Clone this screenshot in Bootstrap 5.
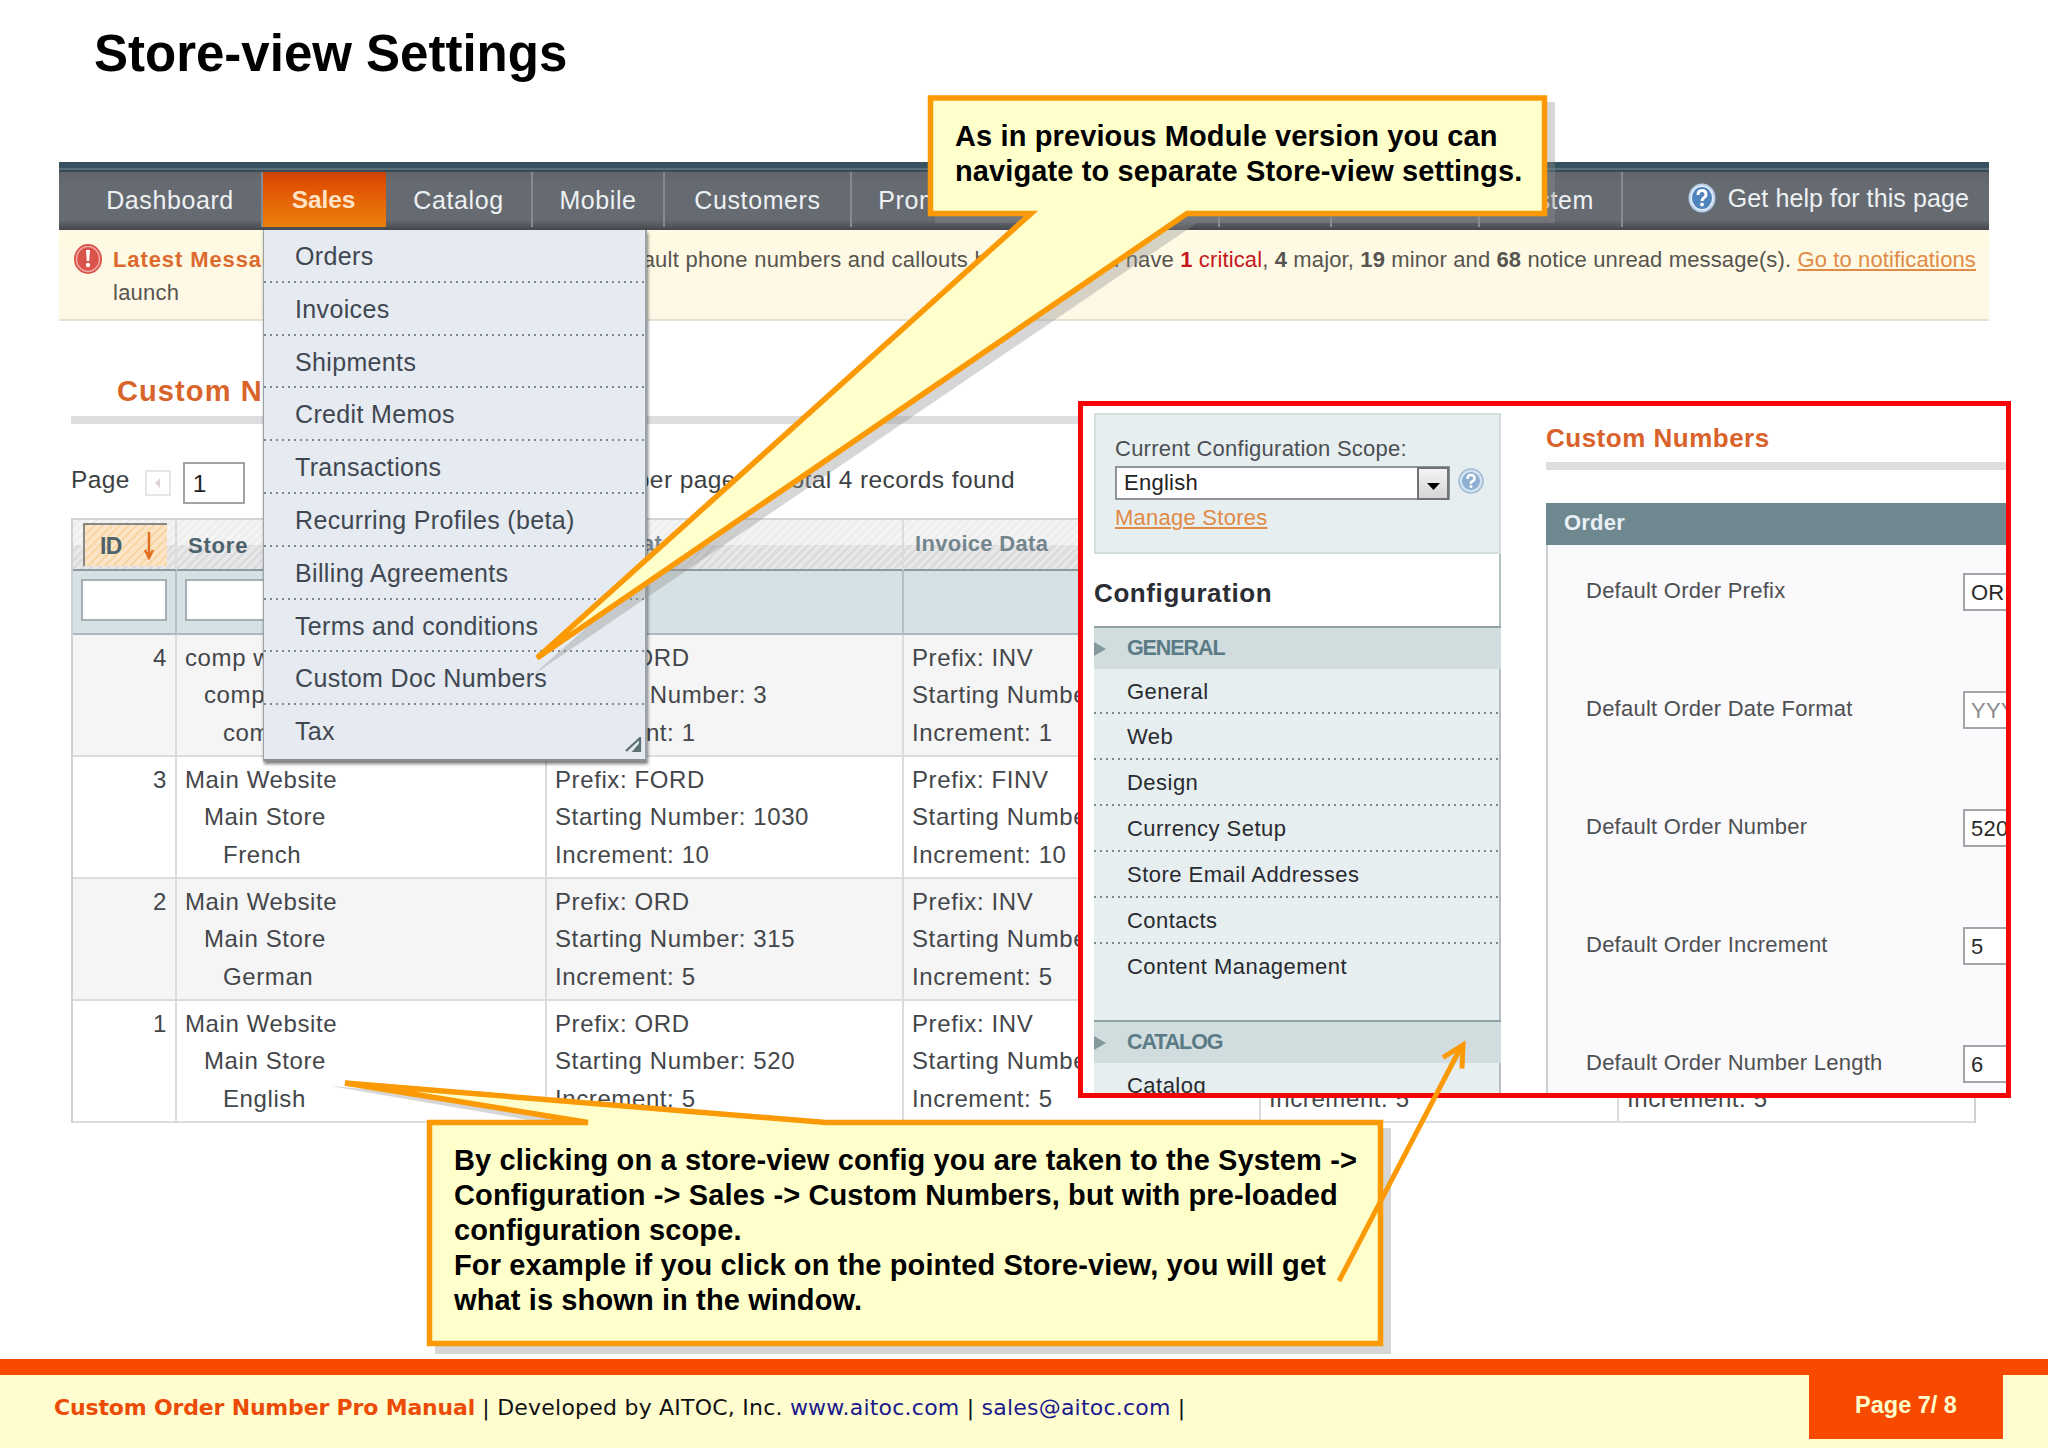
<!DOCTYPE html>
<html lang="en">
<head>
<meta charset="utf-8">
<meta name="viewport" content="width=device-width, initial-scale=1">
<title>Store-view Settings</title>
<link href="https://cdn.jsdelivr.net/npm/bootstrap@5.3.0/dist/css/bootstrap.min.css" rel="stylesheet">
<style>
body{font-family:"Liberation Sans",Arial,sans-serif;background:#fff;color:#3c3f42}
.slide{width:2048px;height:1448px}
.slide-title{font-size:51px;line-height:107px;height:162px;padding-left:94px;color:#000}
.shot{margin-left:59px;width:1930px;height:1197px}
/* admin menu bar */
.strip{height:10px;background:linear-gradient(#37525f 0 6px,#56707a 6px 8px,#3b4c56 8px)}
.admin-nav{height:58px;background:linear-gradient(#60656b 0,#666b72 12px,#666b72 48px,#43464a 58px);font-size:25px;letter-spacing:.6px;color:#eef1f3}
.admin-nav .nav-item{height:55px;line-height:56px;text-align:center;border-right:2px solid #858a90}
.admin-nav .nav-item.on{background:linear-gradient(#c94300,#e25304 25%,#ec820d);color:#ffe3c6;border-color:transparent;background-clip:border-box;letter-spacing:-.1px;font-size:24.5px}
.help-link{font-size:25px;letter-spacing:.1px;line-height:53px}
.help-icon{margin:11px 12px 0 0}
/* message strip */
.notice{height:91px;background:linear-gradient(#fefae3,#fef7e6);border-bottom:2px solid #e4e2d2;padding:13px 13px 0 15px;font-size:22px;line-height:33px;letter-spacing:.24px;color:#57544f}
.notice-icon{margin:1px 11px 0 0}
.notice-left{width:860px}
.notice-right{letter-spacing:.13px}
.critical{color:#c5161d}
.orange{color:#dc6a2c;letter-spacing:.9px}
.notice a,.scope a{color:#e08a45}
.grid-title{font-size:29px;letter-spacing:1.1px;line-height:36px;height:95px;padding:52px 0 0 58px;color:#d9642a}
.rule{height:8px;background:#dedee0}
.shot>.rule{margin-left:12px}
/* pager */
.pager{height:94px;padding:38px 0 0 12px;font-size:24.5px;letter-spacing:.4px;line-height:42px}
.pager .pg-word{line-height:35px}
.pager .pg-size{margin-left:391px;width:142px}
.pager .pg-prev{width:26px;height:26px;border:2px solid #e9e4e6;margin-left:15px}
.pager .pg-input{width:62px;height:42px;border:2px solid #a0a3a6;background:#fff;padding-left:8px;margin-left:12px;line-height:39px;color:#222}
/* grid */
.doc-grid{margin-left:12px;width:1905px;table-layout:fixed;border-collapse:separate;border-spacing:0;border-left:2px solid #cfd1d4;border-right:2px solid #cfd1d4;font-size:24px;line-height:37.3px;letter-spacing:.6px;color:#44464a}
.doc-grid th,.doc-grid td{border-right:2px solid #dbdcde;border-bottom:2px solid #dbdcde;padding:4px 8px 0 8px;vertical-align:top;font-weight:400}
.doc-grid tr>:last-child{border-right:0}
.doc-grid tbody tr{height:122px}
.doc-grid tbody tr:nth-child(odd){background:#f5f5f6}
.doc-grid tbody tr:nth-child(even){background:#fff}
.doc-grid .lbl th{height:53px;padding:7px 0 0 11px;border-top:2px solid #d2d4d6;border-bottom:2px solid #8b9a9c;background:repeating-linear-gradient(135deg,rgba(255,255,255,.35) 0 3px,transparent 3px 6px),linear-gradient(#eeeeef 50%,#dcdcde 50%);font-size:22px;font-weight:700;line-height:34px;letter-spacing:.3px;color:#74868d}
.doc-grid .lbl th:nth-child(-n+2){color:#4d626b}
.doc-grid .lbl .store-h{letter-spacing:.8px;line-height:37px}
.doc-grid .lbl th:first-child{padding:3px 8px 0 10px}
.id-box{height:43px;border:2px solid #8a8782;border-right:0;border-bottom:0;background:repeating-linear-gradient(135deg,#f8d5a4 0 2px,#fce5c6 2px 6px);padding:0 12px 0 15px;font-size:23px;letter-spacing:-.6px}
.doc-grid .flt th{height:64px;background:#d5e1e5;border-bottom:2px solid #acb9bd;border-right-color:#b3bfc3;padding:8px 8px 0 8px}
.flt-in{height:42px;border:2px solid #a5b0b4;background:#fff}
.lv2{padding-left:19px}.lv3{padding-left:38px}
.last-line{padding-top:74.6px}
.c-id{width:104px}.c-store{width:370px}.c-data{width:357px}.c-wide{width:358px}
/* open menu */
.sales-menu{left:263px;top:230px;width:384px;height:531px;background:#e5ebf0;border-left:1px solid #9aa3a8;border-right:2px solid #9aa3a8;border-bottom:2px solid #8a9195;box-shadow:1px 3px 3px rgba(0,0,0,.5);font-size:25px;letter-spacing:.35px;color:#414750}
.sales-menu div{height:52.8px;line-height:53px;padding-left:31px}
.sales-menu div:not(:last-of-type),.cfg-item{background-image:repeating-linear-gradient(90deg,#7f8889 0 2px,transparent 2px 6px);background-size:100% 2px;background-position:left bottom;background-repeat:no-repeat}
.resize{right:3px;bottom:7px}
/* framed window */
.win{left:1078px;top:401px;width:933px;height:697px;border:5px solid #f80303;background:#fff;overflow:hidden;font-size:22px;letter-spacing:.25px}
.win-side{width:407px;margin:7px 0 0 11px;flex:none}
.scope{height:141px;background:#e7eeef;border:2px solid #d3dede;padding:22px 0 0 19px;line-height:24px;color:#4a4f54}
.scope-sel{width:335px;height:34px;border:2px solid #8f9599;background:#fff;line-height:30px;padding-left:7px;color:#222;margin-top:5px}
.scope-help{margin-left:8px}
.scope a{margin-top:6px}
.sel-btn{width:32px;height:33px;margin:-1px -1px 0 0;border:2px solid #6f7375;background:linear-gradient(#f4f4f4,#d5d5d5)}
.cfg{border-right:2px solid #b5c0c3}
.cfg-title{font-size:26px;letter-spacing:.6px;height:72px;line-height:78px;color:#2a2d33}
.cfg-head{height:43px;line-height:41px;margin-right:-2px;background:#d1dcdf;border-top:2px solid #8fa0a3;font-size:21.5px;letter-spacing:-1.1px;color:#5a7b85}
.cfg-head svg{margin-right:21px}
.cfg-item{height:46px;line-height:45px;padding-left:33px;background-color:#e7eef0;letter-spacing:.47px;color:#272a2f}
.cfg-first{height:45px}
.cfg-last{height:76px;background-image:none}
.win-main{margin:0 0 0 45px;flex:none;width:470px}
.win-title{font-size:26px;letter-spacing:.5px;line-height:30px;padding-top:17px;height:56px;color:#d9622a}
.order-head{margin-top:33px;height:42px;line-height:39px;background:#6f878e;color:#e8f2f6;padding-left:18px;letter-spacing:.2px}
.order-body{height:600px;background:#faf9fb;border-left:2px solid #cfd0d3;padding:28px 0 0 38px;color:#4d4f52}
.order-row{height:118px}
.order-row span{width:377px;flex:none;line-height:36px}
.order-in{width:120px;flex:none;height:38px;border:2px solid #a3a6a8;background:#fff;padding-left:6px;line-height:36px;color:#2a2a2a}
.order-in.muted{color:#8a8a8a}
/* callouts */
.marks{left:0;top:0;pointer-events:none}
.note-text{font-size:29px;font-weight:700;line-height:35px;color:#000;letter-spacing:.12px;white-space:nowrap}
.note-a{left:955px;top:118.5px}
.note-b{left:454px;top:1143px}
/* footer */
.foot{height:89px;border-top:16px solid #f74900;background:#fffdcf;padding-left:54px;padding-right:45px;font-family:"DejaVu Sans",Verdana,sans-serif;font-size:22px;letter-spacing:.22px;color:#111}
.foot-text{line-height:65px;white-space:nowrap}
.foot-text b{color:#ec4b06;letter-spacing:-.17px}.foot-text i{font-style:normal;color:#1a1a8c}
.page-no{width:194px;height:64px;background:#f74900;color:#ffffcc;font:700 23.5px/60px "Liberation Sans",sans-serif;letter-spacing:0}
</style>
</head>
<body>
<main class="slide position-relative overflow-hidden">
  <h1 class="slide-title fw-bold m-0">Store-view Settings</h1>

  <section class="shot">
    <div class="strip"></div>
    <nav class="admin-nav d-flex">
      <div class="nav-item" style="width:204px;padding-left:20px">Dashboard</div>
      <div class="nav-item on fw-bold" style="width:123px">Sales</div>
      <div class="nav-item" style="width:147px">Catalog</div>
      <div class="nav-item" style="width:132px">Mobile</div>
      <div class="nav-item" style="width:187px">Customers</div>
      <div class="nav-item" style="width:187px">Promotions</div>
      <div class="nav-item" style="width:181px">Newsletter</div>
      <div class="nav-item" style="width:112px">CMS</div>
      <div class="nav-item" style="width:148px">Reports</div>
      <div class="nav-item" style="width:143px">System</div>
      <div class="help-link d-flex ms-auto pe-3 me-1">
        <svg width="28" height="30" viewBox="0 0 28 30" class="help-icon"><ellipse cx="14" cy="15" rx="13.5" ry="14.5" fill="#b9d0ea"/><ellipse cx="14" cy="15" rx="11.5" ry="12.5" fill="#e3eef8"/><ellipse cx="14" cy="15" rx="10" ry="11" fill="#4f83bb"/><path d="M10 12q0-4.500 4-4.500t4 4q0 2-2 3.200t-2 3.300" fill="none" stroke="#fff" stroke-width="3"/><circle cx="14" cy="21.500" r="1.900" fill="#fff"/></svg>
        <span>Get help for this page</span>
      </div>
    </nav>
    <div class="notice d-flex">
      <svg width="28" height="30" viewBox="0 0 28 30" class="notice-icon flex-shrink-0"><ellipse cx="14" cy="15" rx="14" ry="15" fill="#d9534b"/><ellipse cx="14" cy="15" rx="11.500" ry="12.500" fill="none" stroke="#f2aaa2" stroke-width="1.500"/><path d="M12 6h4l-.8 11h-2.400z" fill="#fff"/><circle cx="14" cy="21" r="2.200" fill="#fff"/></svg>
      <div class="notice-left flex-shrink-0 text-nowrap"><b class="orange">Latest Message:</b> Reminder: Change Magento`s default phone numbers and callouts before<br>launch</div>
      <div class="notice-right ms-auto text-nowrap">You have <b class="critical">1</b> <span class="critical">critical</span>, <b>4</b> major, <b>19</b> minor and <b>68</b> notice unread message(s). <a href="#">Go to notifications</a></div>
    </div>
    <h2 class="grid-title fw-bold m-0">Custom Numbers</h2>
    <div class="rule"></div>
    <div class="pager d-flex">
      <span class="pg-word">Page</span>
      <span class="pg-prev mt-2"><svg width="22" height="22" class="d-block"><path d="M13 6v10l-5-5z" fill="#ddd5d8"/></svg></span>
      <span class="pg-input">1</span>
      <span class="pg-word pg-size">per page &nbsp;|</span>
      <span class="pg-word">Total 4 records found</span>
    </div>
    <table class="doc-grid">
      <colgroup><col class="c-id"><col class="c-store"><col class="c-data"><col class="c-data"><col class="c-wide"><col></colgroup>
      <thead>
        <tr class="lbl">
          <th><div class="id-box d-flex justify-content-between align-items-center">ID <svg width="12" height="28" viewBox="0 0 12 28"><path d="M6 0v25M2 18l4 8 4-8" fill="none" stroke="#e0701f" stroke-width="2.500"/></svg></div></th>
          <th class="store-h">Store</th><th>Order Data</th><th>Invoice Data</th><th></th><th></th>
        </tr>
        <tr class="flt"><th><div class="flt-in"></div></th><th><div class="flt-in"></div></th><th></th><th></th><th></th><th></th></tr>
      </thead>
      <tbody>
        <tr><td class="text-end">4</td><td>comp website<div class="lv2">comp store</div><div class="lv3">comp view</div></td><td>Prefix: ORD<br>Starting Number: 3<br>Increment: 1</td><td>Prefix: INV<br>Starting Number: 3<br>Increment: 1</td><td></td><td></td></tr>
        <tr><td class="text-end">3</td><td>Main Website<div class="lv2">Main Store</div><div class="lv3">French</div></td><td>Prefix: FORD<br>Starting Number: 1030<br>Increment: 10</td><td>Prefix: FINV<br>Starting Number: 1030<br>Increment: 10</td><td></td><td></td></tr>
        <tr><td class="text-end">2</td><td>Main Website<div class="lv2">Main Store</div><div class="lv3">German</div></td><td>Prefix: ORD<br>Starting Number: 315<br>Increment: 5</td><td>Prefix: INV<br>Starting Number: 315<br>Increment: 5</td><td></td><td></td></tr>
        <tr><td class="text-end">1</td><td>Main Website<div class="lv2">Main Store</div><div class="lv3">English</div></td><td>Prefix: ORD<br>Starting Number: 520<br>Increment: 5</td><td>Prefix: INV<br>Starting Number: 520<br>Increment: 5</td><td><div class="last-line">Increment: 5</div></td><td><div class="last-line">Increment: 5</div></td></tr>
      </tbody>
    </table>
  </section>

  <div class="sales-menu position-absolute">
    <div>Orders</div><div>Invoices</div><div>Shipments</div><div>Credit Memos</div><div>Transactions</div><div>Recurring Profiles (beta)</div><div>Billing Agreements</div><div>Terms and conditions</div><div>Custom Doc Numbers</div><div>Tax</div>
    <svg class="resize position-absolute" width="17" height="15"><path d="M1 14 15 1v13H9l6-7" stroke="#5d7075" stroke-width="2.200" fill="none"/><path d="M9 14l6-7v7z" fill="#5d7075"/></svg>
  </div>

  <section class="win position-absolute d-flex">
    <div class="win-side">
      <div class="scope">
        <div>Current Configuration Scope:</div>
        <div class="d-flex align-items-center">
          <div class="scope-sel d-flex justify-content-between">English<span class="sel-btn"><svg width="28" height="29" class="d-block"><path d="M8 14h13l-6.500 7z" fill="#000"/></svg></span></div>
          <svg width="26" height="26" viewBox="0 0 26 26" class="scope-help"><circle cx="13" cy="13" r="12" fill="#d3e2f0" stroke="#9dbad6" stroke-width="1.500"/><circle cx="13" cy="13" r="9" fill="#8fb0d2"/><path d="M9.500 11q0-4 3.500-4t3.500 3.500q0 2-2 2.700t-1.500 2.800" fill="none" stroke="#fff" stroke-width="2.500"/><circle cx="13" cy="18.500" r="1.500" fill="#fff"/></svg>
        </div>
        <a href="#" class="d-inline-block">Manage Stores</a>
      </div>
      <div class="cfg">
        <div class="cfg-title fw-bold">Configuration</div>
        <div class="cfg-head fw-bold d-flex align-items-center"><svg width="12" height="14"><path d="M0 0v14l12-7z" fill="#84999d"/></svg>GENERAL</div>
        <div class="cfg-item cfg-first">General</div><div class="cfg-item">Web</div><div class="cfg-item">Design</div><div class="cfg-item">Currency Setup</div><div class="cfg-item">Store Email Addresses</div><div class="cfg-item">Contacts</div><div class="cfg-item cfg-last">Content Management</div>
        <div class="cfg-head fw-bold d-flex align-items-center"><svg width="12" height="14"><path d="M0 0v14l12-7z" fill="#84999d"/></svg>CATALOG</div>
        <div class="cfg-item">Catalog</div>
      </div>
    </div>
    <div class="win-main">
      <div class="win-title fw-bold">Custom Numbers</div>
      <div class="rule"></div>
      <div class="order-head fw-bold">Order</div>
      <div class="order-body">
        <div class="order-row d-flex"><span>Default Order Prefix</span><div class="order-in">ORD</div></div>
        <div class="order-row d-flex"><span>Default Order Date Format</span><div class="order-in muted">YYYY</div></div>
        <div class="order-row d-flex"><span>Default Order Number</span><div class="order-in">520</div></div>
        <div class="order-row d-flex"><span>Default Order Increment</span><div class="order-in">5</div></div>
        <div class="order-row d-flex"><span>Default Order Number Length</span><div class="order-in">6</div></div>
      </div>
    </div>
  </section>

  <svg class="marks position-absolute" width="2048" height="1448">
    <g fill="#8c8c8c" fill-opacity=".36">
      <path d="M935 102H1555V223H1197L533 675 1045 223H935z"/>
      <path d="M435 1128H575L330 1086 830 1128H1391V1354H435z"/>
    </g>
    <g fill="#ffffcc" stroke="#fb9a05" stroke-width="5.500">
      <path d="M930.500 98H1544.500V213.500H1187L537 658 1031 213.500H930.500z"/>
      <path d="M429.500 1122.500H588L345 1083 826 1122.500H1380.500V1343.500H429.500z"/>
    </g>
    <path d="M1339 1281 1462 1045M1443 1057.500 1463 1045 1462 1068.500" fill="none" stroke="#fb9a05" stroke-width="5"/>
  </svg>
  <div class="note-text note-a position-absolute">As in previous Module version you can<br>navigate to separate Store-view settings.</div>
  <div class="note-text note-b position-absolute">By clicking on a store-view config you are taken to the System -&gt;<br>Configuration -&gt; Sales -&gt; Custom Numbers, but with pre-loaded<br>configuration scope.<br>For example if you click on the pointed Store-view, you will get<br>what is shown in the window.</div>

  <footer class="foot d-flex justify-content-between">
    <div class="foot-text"><b>Custom Order Number Pro Manual</b> | Developed by AITOC, Inc. <i>www.aitoc.com</i> | <i>sales@aitoc.com</i> |</div>
    <div class="page-no text-center">Page 7/ 8</div>
  </footer>
</main>
<script src="https://cdn.jsdelivr.net/npm/bootstrap@5.3.0/dist/js/bootstrap.bundle.min.js"></script>
</body>
</html>
